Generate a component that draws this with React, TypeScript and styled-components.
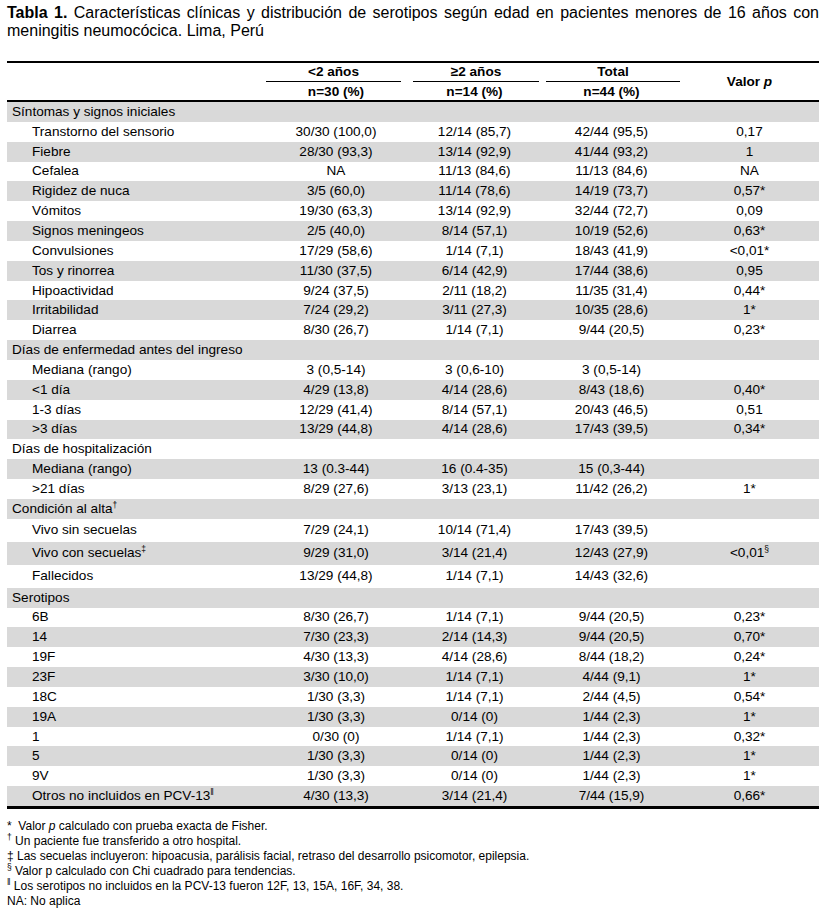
import React from "react";
import styled, { createGlobalStyle } from "styled-components";

const Global = createGlobalStyle`
  html, body { margin: 0; padding: 0; background: #fff; }
  body { font-family: "Liberation Sans", Arial, sans-serif; color: #000; }
`;

const COLS = "259px 140px 137px 137px 139px";

const Page = styled.div`
  width: 812px;
  padding: 4px 5px 0 7px;
`;

const Title = styled.div`
  font-size: 16px;
  line-height: 18px;
`;

const TitleLine = styled.span<{ $justify?: boolean }>`
  display: block;
  text-align: ${(p) => (p.$justify ? "justify" : "left")};
  text-align-last: ${(p) => (p.$justify ? "justify" : "auto")};
  white-space: ${(p) => (p.$justify ? "normal" : "nowrap")};
`;

const Bold = styled.b`
  font-weight: 700;
`;

const Table = styled.div`
  margin-top: 21px;
  font-size: 13.6px;
  border-bottom: 3px solid #000;
`;

const Head = styled.div`
  display: grid;
  grid-template-columns: ${COLS};
  grid-template-rows: 19px 18px;
  border-top: 2px solid #000;
  border-bottom: 2px solid #000;
  font-weight: 700;
`;

const GroupHead = styled.div<{ $col: number; $l: number; $r: number }>`
  grid-column: ${(p) => p.$col};
  grid-row: 1;
  display: flex;
  align-items: stretch;
  padding: 0 ${(p) => p.$r}px 0 ${(p) => p.$l}px;
`;

const Underlined = styled.span`
  flex: 1;
  display: flex;
  align-items: center;
  justify-content: center;
  border-bottom: 1.3px solid #000;
  line-height: 16px;
`;

const SubHead = styled.div<{ $col: number }>`
  grid-column: ${(p) => p.$col};
  grid-row: 2;
  display: flex;
  align-items: center;
  justify-content: center;
`;

const PHead = styled.div`
  grid-column: 5;
  grid-row: 1 / span 2;
  display: flex;
  align-items: center;
  justify-content: center;
`;

const Row = styled.div<{ $shaded: boolean; $h: number }>`
  display: grid;
  grid-template-columns: ${COLS};
  align-items: center;
  height: ${(p) => p.$h}px;
  background: ${(p) => (p.$shaded ? "#d9d9d9" : "transparent")};
  line-height: 16px;
`;

const Label = styled.div<{ $indent: boolean }>`
  padding-left: ${(p) => (p.$indent ? 25 : 5)}px;
  white-space: nowrap;
`;

const Cell = styled.div`
  text-align: center;
  white-space: nowrap;
`;

const Sup = styled.sup`
  font-size: 8.5px;
  line-height: 0;
  vertical-align: 5px;
  font-family: "Liberation Sans", "DejaVu Sans", sans-serif;
`;

const Notes = styled.div`
  margin-top: 10px;
  font-size: 12px;
  line-height: 15px;
`;

const Note = styled.div`
  white-space: nowrap;
`;

type R = { label: React.ReactNode; v?: React.ReactNode[]; group?: boolean; h?: number };

const rows: R[] = [
  { label: "Síntomas y signos iniciales", group: true },
  { label: "Transtorno del sensorio", v: ["30/30 (100,0)", "12/14 (85,7)", "42/44 (95,5)", "0,17"] },
  { label: "Fiebre", v: ["28/30 (93,3)", "13/14 (92,9)", "41/44 (93,2)", "1"] },
  { label: "Cefalea", v: ["NA", "11/13 (84,6)", "11/13 (84,6)", "NA"] },
  { label: "Rigidez de nuca", v: ["3/5 (60,0)", "11/14 (78,6)", "14/19 (73,7)", "0,57*"] },
  { label: "Vómitos", v: ["19/30 (63,3)", "13/14 (92,9)", "32/44 (72,7)", "0,09"] },
  { label: "Signos meningeos", v: ["2/5 (40,0)", "8/14 (57,1)", "10/19 (52,6)", "0,63*"] },
  { label: "Convulsiones", v: ["17/29 (58,6)", "1/14 (7,1)", "18/43 (41,9)", "<0,01*"] },
  { label: "Tos y rinorrea", v: ["11/30 (37,5)", "6/14 (42,9)", "17/44 (38,6)", "0,95"] },
  { label: "Hipoactividad", v: ["9/24 (37,5)", "2/11 (18,2)", "11/35 (31,4)", "0,44*"] },
  { label: "Irritabilidad", v: ["7/24 (29,2)", "3/11 (27,3)", "10/35 (28,6)", "1*"] },
  { label: "Diarrea", v: ["8/30 (26,7)", "1/14 (7,1)", "9/44 (20,5)", "0,23*"] },
  { label: "Días de enfermedad antes del ingreso", group: true },
  { label: "Mediana (rango)", v: ["3 (0,5-14)", "3 (0,6-10)", "3 (0,5-14)", ""] },
  { label: "<1 día", v: ["4/29 (13,8)", "4/14 (28,6)", "8/43 (18,6)", "0,40*"] },
  { label: "1-3 días", v: ["12/29 (41,4)", "8/14 (57,1)", "20/43 (46,5)", "0,51"] },
  { label: ">3 días", v: ["13/29 (44,8)", "4/14 (28,6)", "17/43 (39,5)", "0,34*"] },
  { label: "Días de hospitalización", group: true },
  { label: "Mediana (rango)", v: ["13 (0.3-44)", "16 (0.4-35)", "15 (0,3-44)", ""] },
  { label: ">21 días", v: ["8/29 (27,6)", "3/13 (23,1)", "11/42 (26,2)", "1*"] },
  { label: <>Condición al alta<Sup>†</Sup></>, group: true },
  { label: "Vivo sin secuelas", v: ["7/29 (24,1)", "10/14 (71,4)", "17/43 (39,5)", ""], h: 23 },
  { label: <>Vivo con secuelas<Sup>‡</Sup></>, v: ["9/29 (31,0)", "3/14 (21,4)", "12/43 (27,9)", <>{"<0,01"}<Sup>§</Sup></>], h: 23 },
  { label: "Fallecidos", v: ["13/29 (44,8)", "1/14 (7,1)", "14/43 (32,6)", ""], h: 23 },
  { label: "Serotipos", group: true },
  { label: "6B", v: ["8/30 (26,7)", "1/14 (7,1)", "9/44 (20,5)", "0,23*"] },
  { label: "14", v: ["7/30 (23,3)", "2/14 (14,3)", "9/44 (20,5)", "0,70*"] },
  { label: "19F", v: ["4/30 (13,3)", "4/14 (28,6)", "8/44 (18,2)", "0,24*"] },
  { label: "23F", v: ["3/30 (10,0)", "1/14 (7,1)", "4/44 (9,1)", "1*"] },
  { label: "18C", v: ["1/30 (3,3)", "1/14 (7,1)", "2/44 (4,5)", "0,54*"] },
  { label: "19A", v: ["1/30 (3,3)", "0/14 (0)", "1/44 (2,3)", "1*"] },
  { label: "1", v: ["0/30 (0)", "1/14 (7,1)", "1/44 (2,3)", "0,32*"] },
  { label: "5", v: ["1/30 (3,3)", "0/14 (0)", "1/44 (2,3)", "1*"] },
  { label: "9V", v: ["1/30 (3,3)", "0/14 (0)", "1/44 (2,3)", "1*"] },
  { label: <>Otros no incluidos en PCV-13<Sup>‖</Sup></>, v: ["4/30 (13,3)", "3/14 (21,4)", "7/44 (15,9)", "0,66*"] },
];

export default function App() {
  return (
    <>
      <Global />
      <Page>
        <Title>
          <TitleLine $justify>
            <Bold>Tabla 1.</Bold> Características clínicas y distribución de serotipos según edad en pacientes menores de 16 años con
          </TitleLine>
          <TitleLine>meningitis neumocócica. Lima, Perú</TitleLine>
        </Title>
        <Table>
          <Head>
            <GroupHead $col={2} $l={0} $r={5}>
              <Underlined>{"<2 años"}</Underlined>
            </GroupHead>
            <GroupHead $col={3} $l={7} $r={4}>
              <Underlined>≥2 años</Underlined>
            </GroupHead>
            <GroupHead $col={4} $l={3} $r={0}>
              <Underlined>Total</Underlined>
            </GroupHead>
            <SubHead $col={2}>n=30 (%)</SubHead>
            <SubHead $col={3}>n=14 (%)</SubHead>
            <SubHead $col={4}>n=44 (%)</SubHead>
            <PHead>
              Valor&nbsp;<i>p</i>
            </PHead>
          </Head>
          {rows.map((r, i) => (
            <Row key={i} $shaded={i % 2 === 0} $h={r.h ?? 19.85}>
              <Label $indent={!r.group}>{r.label}</Label>
              {(r.v ?? ["", "", "", ""]).map((c, j) => (
                <Cell key={j}>{c}</Cell>
              ))}
            </Row>
          ))}
        </Table>
        <Notes>
          <Note>
            *&nbsp; Valor <i>p</i> calculado con prueba exacta de Fisher.
          </Note>
          <Note>
            <Sup>†</Sup> Un paciente fue transferido a otro hospital.
          </Note>
          <Note>‡ Las secuelas incluyeron: hipoacusia, parálisis facial, retraso del desarrollo psicomotor, epilepsia.</Note>
          <Note>
            <Sup>§</Sup> Valor p calculado con Chi cuadrado para tendencias.
          </Note>
          <Note>
            <Sup>‖</Sup> Los serotipos no incluidos en la PCV-13 fueron 12F, 13, 15A, 16F, 34, 38.
          </Note>
          <Note>NA: No aplica</Note>
        </Notes>
      </Page>
    </>
  );
}
